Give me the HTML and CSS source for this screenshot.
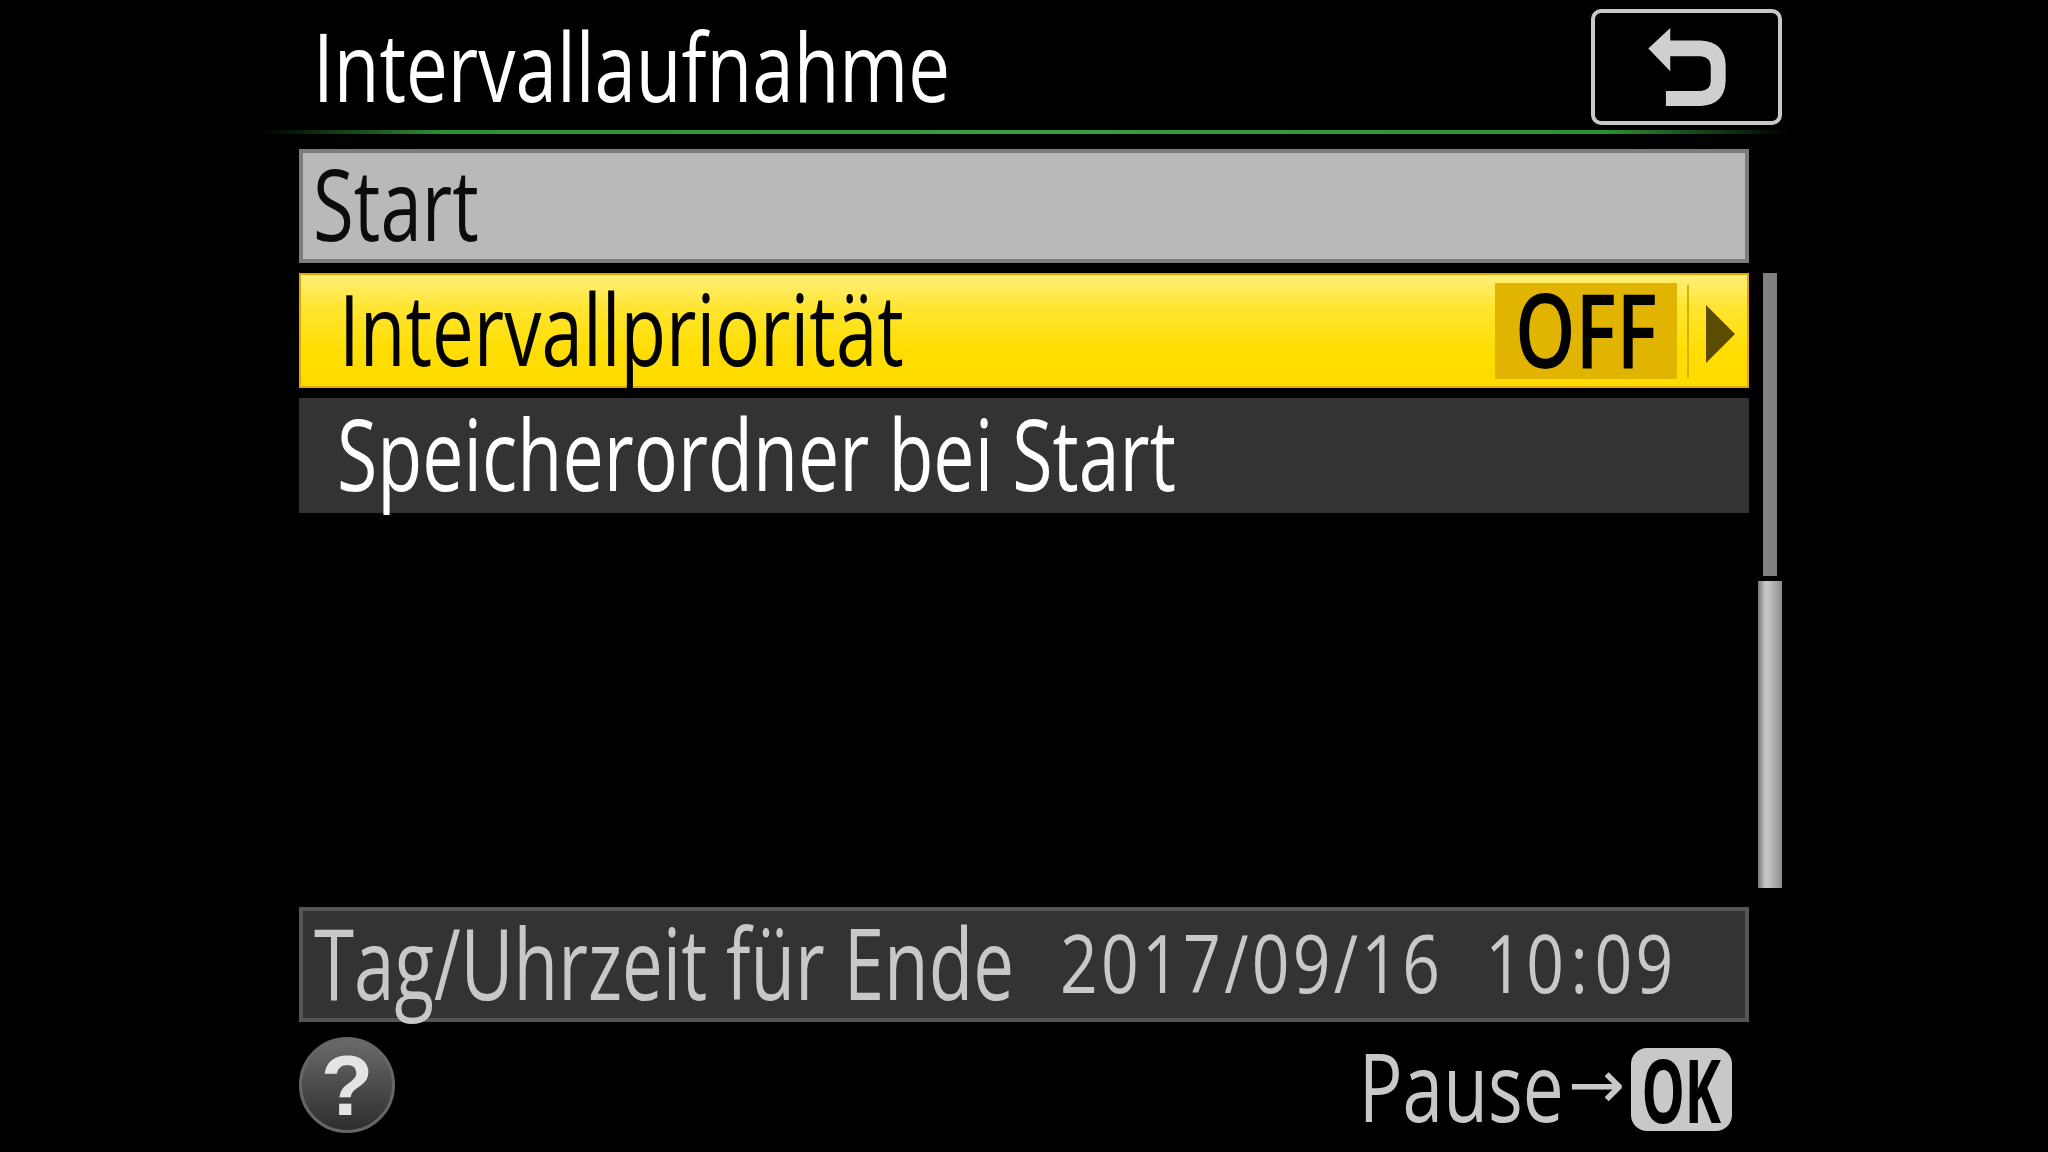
FILE: index.html
```html
<!DOCTYPE html>
<html lang="de">
  <head>
    <meta charset="utf-8">
    <title>Intervallaufnahme</title>
    <link rel="stylesheet" href="styles.css">
  </head>
  <body>
    <div class="screen">
      <div class="header">
        <h1 class="title"><span class="cond titleText">Intervallaufnahme</span></h1>
        <div class="backButton">
          <svg class="backIcon" viewBox="742 80 233 235">
            <path d="M808 80 L742 142 L808 210 L808 165 L900 165 Q930 168 930 195 L930 240 Q930 268 900 270 L795 270 L795 315 L900 315 Q972 312 975 240 L975 190 Q972 122 900 118 L808 118 Z"/>
          </svg>
        </div>
      </div>
      <div class="greenLine"></div>

      <div class="row startRow"><span class="cond">Start</span></div>

      <div class="listArea">
        <div class="list">
          <div class="row menuRow selected">
            <span class="cond">Intervallpriorität</span>
            <div class="value"><span class="offText">OFF</span></div>
            <div class="divider"></div>
            <div class="arrow"></div>
          </div>
          <div class="row menuRow dark"><span class="cond saveText">Speicherordner bei Start</span></div>
        </div>
        <div class="scroll">
          <div class="track"></div>
          <div class="thumb"></div>
        </div>
      </div>

      <div class="row endRow">
        <span class="cond endLabel">Tag/Uhrzeit für Ende</span>
        <span class="cond endDate">2017/09/16 10<span class="colon">:</span>09</span>
      </div>

      <div class="footer">
        <div class="help">?</div>
        <div class="pause">
          <span class="cond pauseText">Pause</span>
          <span class="pauseArrow">→</span>
          <span class="okChip"><span class="okText">OK</span></span>
        </div>
      </div>
    </div>
  </body>
</html>
```

FILE: styles.css
```css
html {
  font-family: "Open Sans", "Noto Sans", sans-serif;
}

body {
  margin: 0;
  background-color: #000;
}

/* the blur stands in for the soft upscaled look of the camera screen */
.screen {
  width: 2048px;
  height: 1152px;
  padding-left: 299px;
  box-sizing: border-box;
  overflow: hidden;
  background-color: #000;
  filter: blur(0.7px);
}

/* squeezes the font down to the narrow camera type */
.cond {
  display: inline-block;
  white-space: nowrap;
  transform: scaleX(0.76);
  transform-origin: left center;
}

.header {
  display: flex;
  justify-content: space-between;
  align-items: flex-start;
  width: 1483px;
  height: 129px;
  padding-top: 9px;
  box-sizing: border-box;
}

.title {
  margin: 0 0 0 14px;
  font-size: 95px;
  line-height: 112px;
  font-weight: 400;
  color: #fff;
}

.titleText {
  transform: scaleX(0.784);
}

.backButton {
  display: flex;
  align-items: center;
  justify-content: center;
  width: 191px;
  height: 116px;
  box-sizing: border-box;
  border: 4px solid #c8c8c8;
  border-radius: 10px;
}

.backIcon {
  width: 78px;
  height: 78px;
  fill: #cfcfcf;
}

.greenLine {
  width: 1530px;
  height: 4px;
  margin: 1px 0 15px -39px;
  background-image: linear-gradient(to right, #000 0%, #2f8f35 12%, #3c9c40 50%, #2f8f35 88%, #000 100%);
}

.row {
  display: flex;
  align-items: center;
  width: 1450px;
  height: 114px;
  padding-bottom: 6px;
  box-sizing: border-box;
  font-size: 98px;
}

.startRow {
  padding-left: 10px;
  border: 4px solid #7c7c7c;
  background-color: #b9b9b9;
  color: #0c0c0c;
  margin-bottom: 10px;
}

.listArea {
  display: flex;
  height: 615px;
}

.list {
  display: flex;
  flex-direction: column;
  gap: 10px;
}

.menuRow {
  padding-left: 38px;
  height: 115px;
}

.saveText {
  transform: scaleX(0.75);
}

.selected {
  position: relative;
  border: 2px solid #e0a800;
  background-image: linear-gradient(to bottom, #fff07a 0%, #ffe530 30%, #ffdd00 70%, #ffdc00 100%);
  color: #000;
}

.dark {
  background-color: #333;
  color: #fff;
}

.value {
  position: absolute;
  left: 1194px;
  top: 8px;
  display: flex;
  align-items: center;
  justify-content: center;
  width: 182px;
  height: 96px;
  padding-bottom: 6px;
  box-sizing: border-box;
  background-color: #e0b400;
}

.offText {
  display: inline-block;
  font-size: 104px;
  line-height: 90px;
  font-weight: 600;
  transform: scaleX(0.74);
}

.divider {
  position: absolute;
  left: 1386px;
  top: 10px;
  width: 2px;
  height: 93px;
  background-color: #d9b000;
}

.arrow {
  position: absolute;
  left: 1405px;
  top: 30px;
  width: 0;
  height: 0;
  border-style: solid;
  border-width: 29px 0 29px 29px;
  border-color: transparent transparent transparent #5b4c00;
}

.scroll {
  display: flex;
  flex-direction: column;
  align-items: center;
  gap: 5px;
  width: 24px;
  margin-left: 9px;
}

.track {
  width: 14px;
  height: 303px;
  background-color: #808080;
}

.thumb {
  width: 24px;
  height: 307px;
  background-image: linear-gradient(to right, #777 0%, #c8c8c8 30%, #c0c0c0 50%, #8a8a8a 100%);
}

.endRow {
  height: 115px;
  margin-top: 19px;
  padding-left: 11px;
  border: 4px solid #555;
  background-color: #333;
  color: #c8c8c8;
}

.endLabel {
  flex: none;
  width: 746px;
  transform: scaleX(0.742);
}

.endDate {
  font-size: 80px;
  line-height: 90px;
  letter-spacing: 4px;
  word-spacing: 26px;
  transform: scaleX(0.825);
}

.colon {
  margin: 0 4px;
}

.footer {
  display: flex;
  justify-content: space-between;
  align-items: center;
  width: 1433px;
  margin-top: 15px;
  height: 96px;
}

.help {
  display: flex;
  align-items: center;
  justify-content: center;
  width: 96px;
  height: 96px;
  box-sizing: border-box;
  border: 3px solid #666;
  border-radius: 50%;
  background-image: linear-gradient(to bottom, #6a6a6a 0%, #2e2e2e 100%);
  color: #e4e4e4;
  font-family: "Liberation Sans", sans-serif;
  font-size: 86px;
  font-weight: 700;
}

.pause {
  display: flex;
  align-items: center;
  color: #c8c8c8;
}

.pauseText {
  font-size: 96px;
  line-height: 96px;
  transform-origin: right center;
}

.pauseArrow {
  margin: 0 6px 0 4px;
  font-family: "DejaVu Sans", sans-serif;
  font-size: 68px;
  line-height: 96px;
}

.okChip {
  display: flex;
  align-items: center;
  justify-content: center;
  width: 101px;
  height: 83px;
  margin-top: 9px;
  border-radius: 16px;
  background-color: #c8c8c8;
  color: #000;
}

.okText {
  display: inline-block;
  font-size: 88px;
  line-height: 83px;
  font-weight: 700;
  transform: scaleX(0.62);
}
```
